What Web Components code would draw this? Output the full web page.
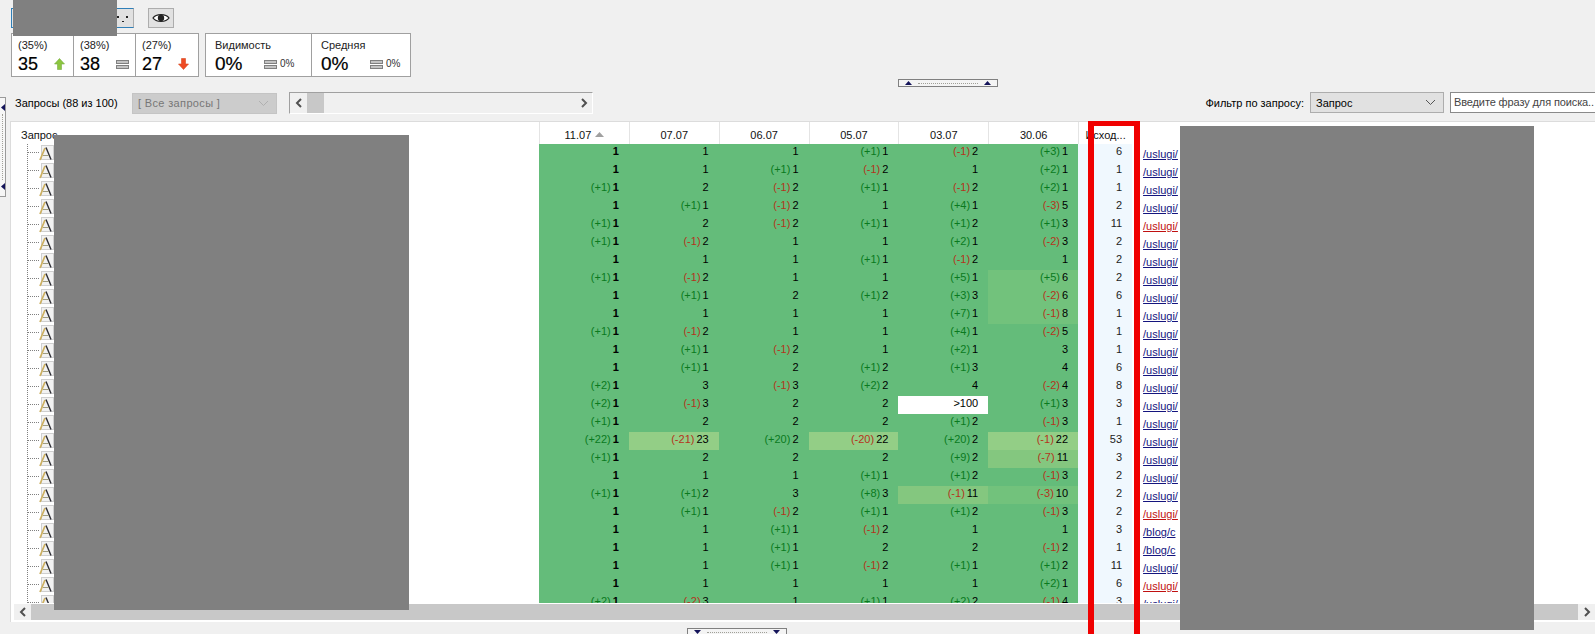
<!DOCTYPE html>
<html lang="ru">
<head>
<meta charset="utf-8">
<title>Позиции</title>
<style>
  html, body { margin: 0; height: 634px; overflow: hidden; background: #f0f0f0; }
  body { font: 11px/14px "Liberation Sans", sans-serif; color: #000; position: relative; }
  .toolbar { display: flex; gap: 14px; padding: 8px 0 0 11px; }
  .stats { display: flex; gap: 6px; padding: 5px 0 0 11px; }
  .grip-top { display: flex; padding: 2px 0 0 898px; }
  .work { display: flex; gap: 4px; padding-top: 5px; }
  .content { flex: 1; min-width: 0; }
  .grip-bottom { display: flex; padding: 6px 0 0 687px; height: 6px; overflow: hidden; }
</style>
</head>
<body>
<app-page>
  <div class="toolbar">
    <tool-button active style="width:123px;padding-right:4px">
      <svg width="12" height="10" viewBox="0 0 12 10"><path d="M0 3h2v2H0zM9 3h2v2H9zM5 8h2v1H5z" fill="#222"/></svg>
    </tool-button>
    <tool-button style="width:26px;justify-content:center">
      <svg width="18" height="12" viewBox="0 0 18 12"><path d="M1 6C4 1.500 14 1.500 17 6 14 10.500 4 10.500 1 6Z" fill="#fff" stroke="#222" stroke-width="1.300"/><circle cx="9" cy="6" r="3.200" fill="#222"/></svg>
    </tool-button>
  </div>
  <div class="stats">
    <stat-group cols="61px 62px 63px" style="width:188px">
      <stat-cell label="(35%)" value="35" trend="up"></stat-cell>
      <stat-cell label="(38%)" value="38" trend="same"></stat-cell>
      <stat-cell label="(27%)" value="27" trend="down"></stat-cell>
    </stat-group>
    <stat-group cols="105px 99px" style="width:206px">
      <stat-cell wide label="Видимость" value="0%" trend="same"></stat-cell>
      <stat-cell wide label="Средняя" value="0%" trend="same"></stat-cell>
    </stat-group>
  </div>
  <div class="grip-top"><grip-handle></grip-handle></div>
  <div class="work">
    <side-rail></side-rail>
    <div class="content">
      <filter-bar></filter-bar>
      <rank-table></rank-table>
    </div>
  </div>
  <div class="grip-bottom"><grip-handle down></grip-handle></div>
</app-page>

<mask-box rect="13,0,104,36"></mask-box>
<mask-box rect="54,135,355,475"></mask-box>
<mask-box rect="1180,126,354,504"></mask-box>
<red-frame></red-frame>

<script>
// Petits helpers pour les icônes
const ICON_EQ = `<svg width="13" height="11" viewBox="0 0 13 11"><rect x=".5" y="1.5" width="12" height="3" fill="#c4c4c4" stroke="#808080"/><rect x=".5" y="6.5" width="12" height="3" fill="#c4c4c4" stroke="#808080"/></svg>`;
const ICON_UP = `<svg width="11" height="12" viewBox="0 0 11 12"><path d="M5.5 .5 10.5 6H7.5V11.5H3.5V6H.5Z" fill="#8cc63f" stroke="#79ad45" stroke-width=".6"/></svg>`;
const ICON_DOWN = `<svg width="11" height="12" viewBox="0 0 11 12"><path d="M3.5 .5H7.5V6H10.5L5.5 11.5 .5 6H3.5Z" fill="#ee4b24" stroke="#d9481f" stroke-width=".6"/></svg>`;
const CHEVRON_DOWN = `<svg width="11" height="7" viewBox="0 0 11 7"><path d="M1 1 5.5 5.5 10 1" fill="none" stroke="currentColor" stroke-width="1"/></svg>`;

class ToolButton extends HTMLElement {
  constructor() {
    super();
    this.attachShadow({ mode: 'open' }).innerHTML = `
      <style>
        :host { display: flex; align-items: center; justify-content: flex-end; box-sizing: border-box; height: 20px; background: #e1e1e1; border: 1px solid #adadad; }
        :host([active]) { border-left-color: #2f7fb8; border-top-color: #2f7fb8; border-bottom-color: #2f7fb8; }
      </style>
      <slot></slot>`;
  }
}

class StatCell extends HTMLElement {
  constructor() {
    super();
    const wide = this.hasAttribute('wide');
    const icon = { up: ICON_UP, down: ICON_DOWN, same: ICON_EQ }[this.getAttribute('trend')];
    this.attachShadow({ mode: 'open' }).innerHTML = `
      <style>
        :host { display: block; box-sizing: border-box; min-width: 0; padding: 5px 0 0 6px; border-left: 1px solid #a0a0a0; }
        :host([wide]) { padding-left: 9px; }
        :host(:first-child) { border-left: 0; }
        .label { height: 13px; line-height: 13px; color: #222; }
        .line { display: flex; align-items: center; height: 22px; margin-top: 1px; }
        .num { flex: none; width: 36px; font-size: 18px; line-height: 22px; -webkit-text-stroke: .2px #000; }
        :host([wide]) .num { width: 49px; font-size: 19px; }
        .ico { display: flex; }
        .sub { padding-left: 3px; font-size: 10px; color: #333; }
      </style>
      <div class="label">${this.getAttribute('label')}</div>
      <div class="line">
        <span class="num">${this.getAttribute('value')}</span>
        <span class="ico">${icon}</span>
        ${wide ? `<span class="sub">0%</span>` : ''}
      </div>`;
  }
}

class StatGroup extends HTMLElement {
  constructor() {
    super();
    this.attachShadow({ mode: 'open' }).innerHTML = `
      <style>
        :host { display: grid; grid-auto-flow: column; box-sizing: border-box; height: 44px; background: #fff; border: 1px solid #a0a0a0; }
      </style>
      <slot></slot>`;
    this.style.gridTemplateColumns = this.getAttribute('cols');
  }
}

class GripHandle extends HTMLElement {
  constructor() {
    super();
    const down = this.hasAttribute('down');
    const tri = down ? 'M0 0H7L3.5 4Z' : 'M3.5 0 7 4H0Z';
    const mark = `<svg width="7" height="4" viewBox="0 0 7 4"><path d="${tri}" fill="#14145a"/></svg>`;
    this.attachShadow({ mode: 'open' }).innerHTML = `
      <style>
        :host { display: flex; align-items: center; gap: 6px; box-sizing: border-box; width: 100px; height: 8px; padding: 0 6px; background: #f4f4f4; border: 1px solid #808080; }
        i { flex: 1; border-top: 1px dotted #a0a098; }
        svg { display: block; }
      </style>
      ${mark}<i></i>${mark}`;
  }
}

class SideRail extends HTMLElement {
  constructor() {
    super();
    const mark = `<svg width="4" height="7" viewBox="0 0 4 7"><path d="M4 0V7L0 3.5Z" fill="#14145a"/></svg>`;
    this.attachShadow({ mode: 'open' }).innerHTML = `
      <style>
        :host { display: flex; flex-direction: column; justify-content: space-between; align-items: center; box-sizing: border-box; flex: none; width: 6px; height: 100px; margin-top: 5px; padding: 6px 0; background: #f6f6f6; border: 1px solid #9a9a9a; border-left: 0; }
        i { flex: 1; border-left: 1px dotted #a0a098; margin: 3px 0; }
        svg { display: block; }
      </style>
      ${mark}<i></i>${mark}`;
  }
}

class WinSelect extends HTMLElement {
  constructor() {
    super();
    this.attachShadow({ mode: 'open' }).innerHTML = `
      <style>
        :host { display: flex; align-items: center; justify-content: space-between; box-sizing: border-box; height: 21px; padding: 0 7px 0 5px; background: #e1e1e1; border: 1px solid #adadad; color: #000; }
        :host([disabled]) { background: #cccccc; border-color: #c4c4c4; color: #777; letter-spacing: .35px; }
        svg { color: #555; flex: none; }
        :host([disabled]) svg { color: #b0b0b0; }
      </style>
      <span><slot></slot></span>${CHEVRON_DOWN}`;
  }
}

class ScrollBar extends HTMLElement {
  constructor() {
    super();
    const arrow = d => `<svg width="8" height="10" viewBox="0 0 8 10"><path d="${d}" fill="none" stroke="#505050" stroke-width="2"/></svg>`;
    this.attachShadow({ mode: 'open' }).innerHTML = `
      <style>
        :host { display: flex; align-items: center; box-sizing: border-box; height: 17px; background: #f0f0f0; }
        .btn { display: flex; align-items: center; justify-content: center; flex: none; width: 17px; height: 100%; background: #f0f0f0; }
        .thumb { flex: none; height: 100%; background: #c8c8c8; }
        .rest { flex: 1; }
      </style>
      <span class="btn">${arrow('M6 1 2 5 6 9')}</span>
      <span class="thumb"></span>
      <span class="rest"></span>
      <span class="btn">${arrow('M2 1 6 5 2 9')}</span>`;
    this.shadowRoot.querySelector('.thumb').style.width = this.getAttribute('thumb');
  }
}

class FilterBar extends HTMLElement {
  constructor() {
    super();
    this.attachShadow({ mode: 'open' }).innerHTML = `
      <style>
        :host { display: flex; align-items: center; box-sizing: border-box; height: 21px; padding-left: 5px; margin-bottom: 8px; }
        .count { width: 117px; white-space: nowrap; }
        win-select.all { width: 145px; margin-top: 1px; }
        scroll-bar { width: 304px; margin-left: 12px; margin-top: 1px; height: 22px; border: 1px solid #fff; border-top-color: #a0a0a0; border-left-color: #a0a0a0; }
        .grow { flex: 1; }
        .lbl { margin-right: 6px; white-space: nowrap; }
        win-select.field { width: 134px; }
        .search { box-sizing: border-box; width: 145px; height: 21px; margin-left: 6px; padding: 2px 3px; background: #fff; border: 1px solid #8a8a8a; border-right: 0; color: #444; letter-spacing: -.12px; white-space: nowrap; overflow: hidden; }
      </style>
      <span class="count">Запросы (88 из 100)</span>
      <win-select class="all" disabled>[ Все запросы ]</win-select>
      <scroll-bar thumb="17px"></scroll-bar>
      <span class="grow"></span>
      <span class="lbl">Фильтр по запросу:</span>
      <win-select class="field">Запрос</win-select>
      <div class="search">Введите фразу для поиска..</div>`;
  }
}

// Une ligne : 6 colonnes de dates, le chiffre "Исход", le lien, couleur du lien
const ROWS = [
  ['1','1','1','+1 1','-1 2','+3 1','6','/uslugi/'],
  ['1','1','+1 1','-1 2','1','+2 1','1','/uslugi/'],
  ['+1 1','2','-1 2','+1 1','-1 2','+2 1','1','/uslugi/'],
  ['1','+1 1','-1 2','1','+4 1','-3 5','2','/uslugi/'],
  ['+1 1','2','-1 2','+1 1','+1 2','+1 3','11','/uslugi/','r'],
  ['+1 1','-1 2','1','1','+2 1','-2 3','2','/uslugi/'],
  ['1','1','1','+1 1','-1 2','1','2','/uslugi/'],
  ['+1 1','-1 2','1','1','+5 1','+5 6','2','/uslugi/'],
  ['1','+1 1','2','+1 2','+3 3','-2 6','6','/uslugi/'],
  ['1','1','1','1','+7 1','-1 8','1','/uslugi/'],
  ['+1 1','-1 2','1','1','+4 1','-2 5','1','/uslugi/'],
  ['1','+1 1','-1 2','1','+2 1','3','1','/uslugi/'],
  ['1','+1 1','2','+1 2','+1 3','4','6','/uslugi/'],
  ['+2 1','3','-1 3','+2 2','4','-2 4','8','/uslugi/'],
  ['+2 1','-1 3','2','2','>100','+1 3','3','/uslugi/'],
  ['+1 1','2','2','2','+1 2','-1 3','1','/uslugi/'],
  ['+22 1','-21 23','+20 2','-20 22','+20 2','-1 22','53','/uslugi/'],
  ['+1 1','2','2','2','+9 2','-7 11','3','/uslugi/'],
  ['1','1','1','+1 1','+1 2','-1 3','2','/uslugi/'],
  ['+1 1','+1 2','3','+8 3','-1 11','-3 10','2','/uslugi/'],
  ['1','+1 1','-1 2','+1 1','+1 2','-1 3','2','/uslugi/','r'],
  ['1','1','+1 1','-1 2','1','1','3','/blog/c'],
  ['1','1','+1 1','2','2','-1 2','1','/blog/c'],
  ['1','1','+1 1','-1 2','+1 1','+1 2','11','/uslugi/'],
  ['1','1','1','1','1','+2 1','6','/uslugi/','r'],
  ['+2 1','-2 3','1','+1 1','+2 2','-1 4','3','/uslugi/'],
];
const DATES = ['07.07','06.07','05.07','03.07','30.06'];

const KEY_ICON = `<svg width="16" height="18" viewBox="0 0 16 18">
  <rect x="2.500" y="1.500" width="12" height="14" fill="#f2f2f2" stroke="#cfcfcf"/>
  <path d="M1 16 6 4" stroke="#cdb060" stroke-width="1.700"/>
  <path d="M7 3.500 12 15.500" stroke="#2c2c34" stroke-width="1.400"/>
  <path d="M4 11.500H10" stroke="#a09d80" stroke-width="1"/>
</svg>`;
const TREE = `<svg width="12" height="18" viewBox="0 0 12 18"><path d="M.5 0V18M1 8.500H12" stroke="#808080" stroke-dasharray="1 1" fill="none"/></svg>`;

function cellColour(value) {
  if (value === '>100') return '#fff';
  const n = Number(value);
  if (n >= 20) return '#93ce86';
  if (n >= 11) return '#84c77f';
  if (n >= 6) return '#72c27c';
  return '#64bc7a';
}

class RankTable extends HTMLElement {
  constructor() {
    super();
    const head = `
      <div class="h name">Запрос</div>
      <div class="h">11.07 <svg width="9" height="5" viewBox="0 0 9 5"><path d="M4.500 0 9 5H0Z" fill="#a0a0a0"/></svg></div>
      ${DATES.map(d => `<div class="h">${d}</div>`).join('')}
      <div class="h">Исход...</div>
      <div class="h blank"></div>`;
    const body = ROWS.map(row => {
      const dates = row.slice(0, 6).map((txt, i) => {
        const parts = txt.split(' ');
        const value = parts[parts.length - 1];
        const delta = parts.length > 1 ? parts[0] : '';
        const tone = delta.startsWith('+') ? 'up' : 'dn';
        return `<div class="c${i === 0 ? ' first' : ''}" style="background:${cellColour(value)}">` +
          (delta ? `<span class="${tone}">(${delta})</span>` : '') + `<span>${value.replace('>', '&gt;')}</span></div>`;
      }).join('');
      return `<div class="tree">${TREE}${KEY_ICON}</div>${dates}` +
        `<div class="c out">${row[6]}</div>` +
        `<div class="link"><a class="${row[8] === 'r' ? 'red' : ''}">${row[7]}</a></div>`;
    }).join('');
    this.attachShadow({ mode: 'open' }).innerHTML = `
      <style>
        :host { display: block; box-sizing: border-box; height: 501px; background: #fff; border: 1px solid #dcdcdc; border-right: 0; }
        .view { height: 481px; overflow: hidden; }
        .grid { display: grid; grid-template-columns: 528px repeat(6, 89.85px) 54px 1fr; grid-template-rows: 22px; grid-auto-rows: 18px; }
        .h { display: flex; align-items: center; justify-content: center; gap: 4px; box-sizing: border-box; padding-top: 3px; border-left: 1px solid #e4e4e4; color: #111; }
        .h.name { justify-content: flex-start; padding-left: 10px; border-left: 0; }
        .h.blank { border-left: 0; }
        .tree { display: flex; padding-left: 16px; }
        .c { height: 18px; padding-right: 10px; text-align: right; line-height: 14px; white-space: nowrap; box-sizing: border-box; }
        .first { font-weight: bold; }
        .first .up, .first .dn { font-weight: normal; }
        .up { color: #0a7a1e; margin-right: 2px; }
        .dn { color: #b5341c; margin-right: 2px; }
        .out { background: #f0f8fe; color: #222; }
        .link { padding: 3px 0 0 11px; line-height: 14px; white-space: nowrap; overflow: hidden; }
        a { color: #14147e; text-decoration: underline; }
        a.red { color: #c01010; }
        .track { box-sizing: border-box; height: 19px; padding-top: 1px; background: #fff; }
        scroll-bar { margin-left: 3px; height: 16px; background: #c8c8c8; }
      </style>
      <div class="view"><div class="grid">${head}${body}</div></div>
      <div class="track"><scroll-bar thumb="0"></scroll-bar></div>`;
  }
}

class MaskBox extends HTMLElement {
  constructor() {
    super();
    this.attachShadow({ mode: 'open' }).innerHTML = `
      <style>:host { display: block; position: absolute; background: #808080; }</style>`;
    const [x, y, w, h] = this.getAttribute('rect').split(',');
    Object.assign(this.style, { left: x + 'px', top: y + 'px', width: w + 'px', height: h + 'px' });
  }
}

class RedFrame extends HTMLElement {
  constructor() {
    super();
    this.attachShadow({ mode: 'open' }).innerHTML = `
      <style>:host { display: block; position: absolute; left: 1088px; top: 121px; box-sizing: border-box; width: 52px; height: 513px; border: 6px solid #f00000; border-top-width: 5px; border-bottom: 0; }</style>`;
  }
}

class AppPage extends HTMLElement {
  constructor() {
    super();
    this.attachShadow({ mode: 'open' }).innerHTML = `
      <style>:host { display: block; }</style>
      <slot></slot>`;
  }
}

[
  ['tool-button', ToolButton], ['stat-cell', StatCell], ['stat-group', StatGroup],
  ['grip-handle', GripHandle], ['side-rail', SideRail], ['win-select', WinSelect],
  ['scroll-bar', ScrollBar], ['filter-bar', FilterBar], ['rank-table', RankTable],
  ['mask-box', MaskBox], ['red-frame', RedFrame], ['app-page', AppPage],
].forEach(([name, cls]) => customElements.define(name, cls));
</script>
</body>
</html>
